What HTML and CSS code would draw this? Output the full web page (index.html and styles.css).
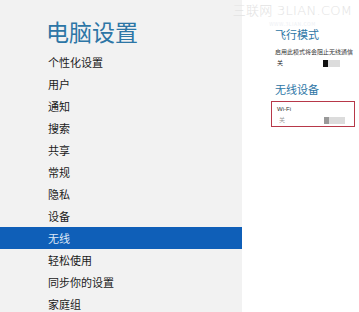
FILE: index.html
```html
<!DOCTYPE html>
<html lang="zh-CN">
<head>
<meta charset="utf-8">
<title>电脑设置</title>
<link rel="stylesheet" href="styles.css">
</head>
<body>
<div class="screen">
  <nav class="side">
    <h1 class="title">电脑设置</h1>
    <ul class="menu">
      <li>个性化设置</li>
      <li>用户</li>
      <li>通知</li>
      <li>搜索</li>
      <li>共享</li>
      <li>常规</li>
      <li>隐私</li>
      <li>设备</li>
      <li class="active">无线</li>
      <li>轻松使用</li>
      <li>同步你的设置</li>
      <li>家庭组</li>
    </ul>
  </nav>
  <main class="pane">
    <div class="watermark">
      <span class="wm-main">三联网 3LIAN.COM</span>
      <span class="wm-sub">WWW.3LIAN.COM</span>
    </div>
    <section class="group">
      <h2 class="heading">飞行模式</h2>
      <p class="desc">启用此模式将会阻止无线通信</p>
      <div class="row">
        <span class="state">关</span>
        <span class="toggle"><span class="thumb dark"></span></span>
      </div>
    </section>
    <section class="group second">
      <h2 class="heading">无线设备</h2>
      <div class="device">
        <div class="dev-name">Wi-Fi</div>
        <div class="row">
          <span class="state light">关</span>
          <span class="toggle wide"><span class="thumb grey"></span></span>
        </div>
      </div>
    </section>
  </main>
</div>
</body>
</html>
```

FILE: styles.css
```css
* { box-sizing: border-box; }
html, body { margin: 0; padding: 0; }
body {
  background: #ffffff;
  font-family: "Noto Sans CJK SC", "Noto Sans", sans-serif;
  color: #111;
}
.screen {
  display: flex;
  width: 359px;
  height: 312px;
  overflow: hidden;
}
.side {
  width: 242px;
  flex: none;
  background: #f2f2f2;
  padding-top: 14px;
}
.title {
  margin: 0 0 0 46px;
  font-size: 23px;
  font-weight: 400;
  line-height: 34px;
  color: #2d76a6;
}
.menu {
  list-style: none;
  margin: 3px 0 0 0;
  padding: 0;
}
.menu li {
  height: 22px;
  line-height: 22px;
  padding-left: 48px;
  font-size: 11px;
  color: #1a1a1a;
}
.menu li.active {
  background: #0f5fb8;
  color: #dfe9f7;
}
.pane {
  flex: 1;
  position: relative;
  padding: 27px 0 0 33px;
}
.watermark {
  position: absolute;
  left: -12px;
  top: 3px;
  width: 125px;
  display: flex;
  flex-direction: column;
  align-items: center;
  pointer-events: none;
}
.wm-main {
  font-family: "DejaVu Sans", "Noto Sans CJK SC", sans-serif;
  font-weight: 200;
  font-size: 13px;
  color: #e3e3e3;
  letter-spacing: 0.3px;
  white-space: nowrap;
  line-height: 16px;
}
.wm-sub {
  margin-top: 2px;
  font-size: 5px;
  color: #eef0f4;
  letter-spacing: 0.5px;
  line-height: 6px;
}
.group { margin: 0; }
.heading {
  margin: 0;
  font-size: 11px;
  font-weight: 400;
  line-height: 14px;
  color: #2d76a6;
}
.desc {
  margin: 7px 0 0 0;
  font-size: 6px;
  line-height: 8px;
  color: #333;
  white-space: nowrap;
}
.row {
  display: flex;
  align-items: center;
  justify-content: space-between;
  height: 10px;
  margin-top: 2px;
  width: 65px;
}
.state {
  font-size: 6px;
  line-height: 8px;
  color: #222;
  padding-left: 2px;
}
.state.light { color: #999; }
.toggle {
  display: flex;
  width: 17px;
  height: 7px;
  background: #dcdcdc;
}
.toggle.wide { width: 21px; }
.thumb {
  width: 5px;
  height: 100%;
}
.thumb.dark { background: #111; }
.thumb.grey { background: #999; }
.second { margin-top: 14px; }
.device {
  margin: 5px 0 0 -4px;
  width: 84px;
  height: 26px;
  border: 1px solid #b73849;
  padding: 3px 0 0 5px;
}
.dev-name {
  font-family: "Liberation Sans", sans-serif;
  font-size: 6px;
  line-height: 9px;
  color: #333;
}
.device .row { width: 68px; margin-top: 1px; }
```
